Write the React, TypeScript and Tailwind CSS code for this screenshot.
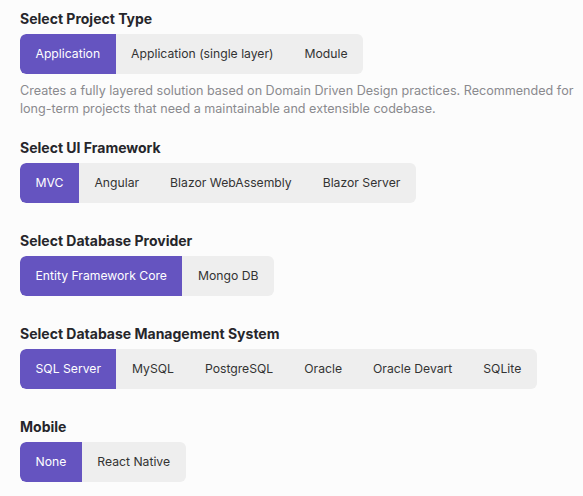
import React, { useState } from 'react';

type Section = {
  title: string;
  options: string[];
  description?: string;
};

const sections: Section[] = [
  {
    title: 'Select Project Type',
    options: ['Application', 'Application (single layer)', 'Module'],
    description:
      'Creates a fully layered solution based on Domain Driven Design practices. Recommended for long-term projects that need a maintainable and extensible codebase.',
  },
  { title: 'Select UI Framework', options: ['MVC', 'Angular', 'Blazor WebAssembly', 'Blazor Server'] },
  { title: 'Select Database Provider', options: ['Entity Framework Core', 'Mongo DB'] },
  {
    title: 'Select Database Management System',
    options: ['SQL Server', 'MySQL', 'PostgreSQL', 'Oracle', 'Oracle Devart', 'SQLite'],
  },
  { title: 'Mobile', options: ['None', 'React Native'] },
];

const OptionGroup = ({ section }: { section: Section }) => {
  const [selected, setSelected] = useState(section.options[0]);

  return (
    <div>
      <h3 className="text-[14px] leading-5 font-bold text-[#26262b]">{section.title}</h3>
      <div className="mt-[5px] inline-flex h-10 rounded-md bg-[#eeeeee] overflow-hidden">
        {section.options.map((opt) => (
          <button
            key={opt}
            onClick={() => setSelected(opt)}
            className={
              selected === opt
                ? 'px-[15.5px] h-full text-[12.2px] text-white bg-[#6554c0] rounded-l-md'
                : 'px-[15.5px] h-full text-[12.2px] text-[#333333]'
            }
          >
            {opt}
          </button>
        ))}
      </div>
      {section.description && (
        <p className="mt-2 mb-[-8px] text-[12.6px] leading-[18px] text-[#8a8a8e]">{section.description}</p>
      )}
    </div>
  );
};

export default function App() {
  return (
    <div
      className="min-h-[496px] bg-[#fcfcfc] pl-5 pr-2 pt-[9px] flex flex-col gap-7"
      style={{ fontFamily: 'Inter, "Noto Sans", sans-serif' }}
    >
      {sections.map((s) => (
        <OptionGroup key={s.title} section={s} />
      ))}
    </div>
  );
}
